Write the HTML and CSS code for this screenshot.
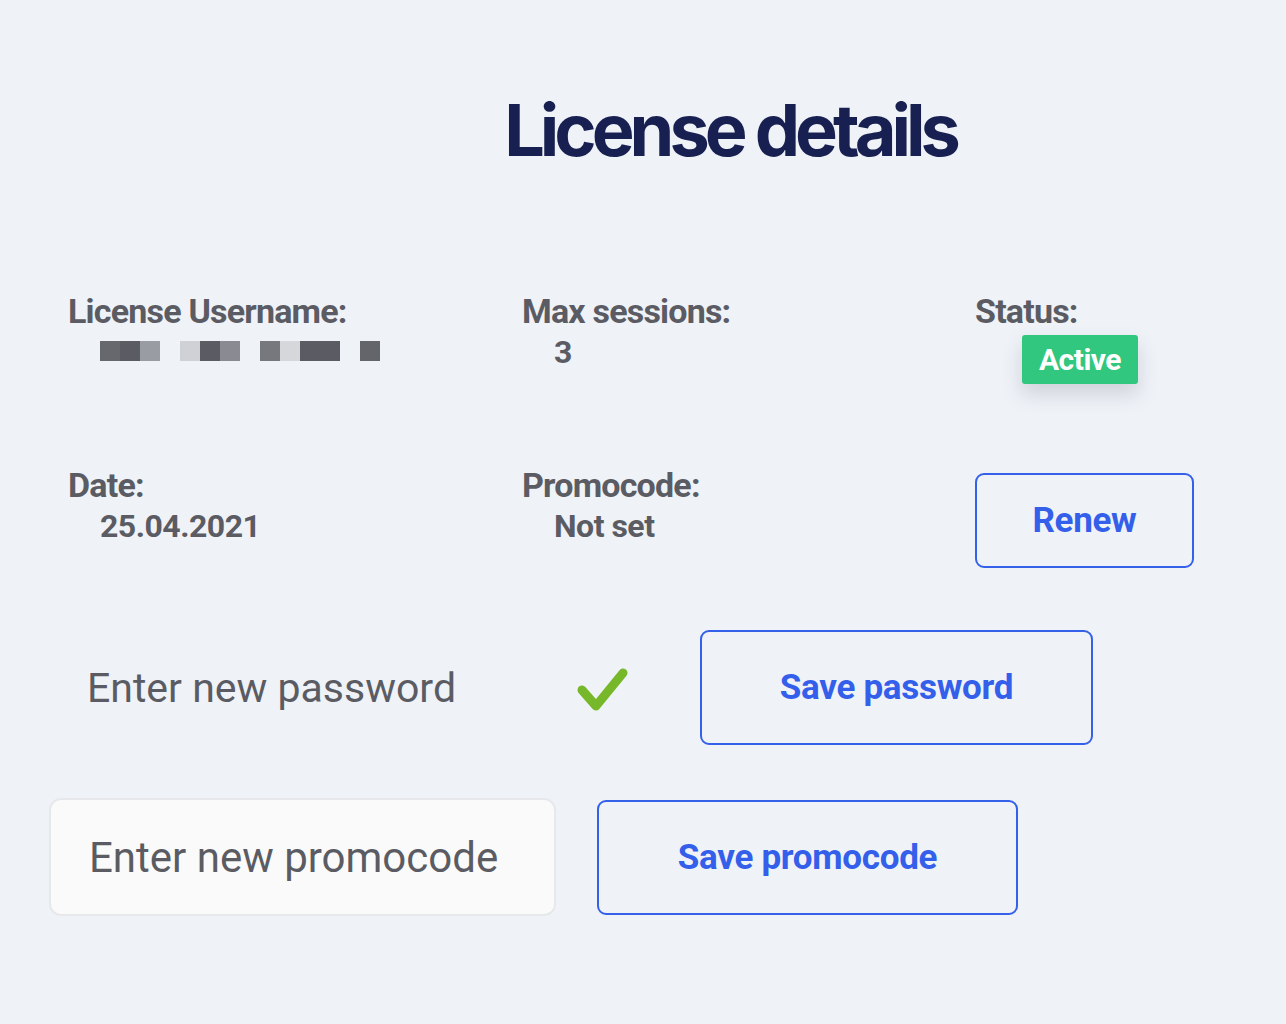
FILE: index.html
```html
<!DOCTYPE html>
<html>
<head>
	<title>License details</title>
	<link rel="stylesheet" href="styles.css">
</head>

<body>
	<main class="page">
		<h1 class="title">License details</h1>

		<section class="info-grid">
			<div class="info-cell">
				<div class="info-label">License Username:</div>
				<div class="pixelated">
					<span class="px c1"></span><span class="px c2"></span><span class="px c3"></span><span class="px gap"></span>
					<span class="px c4"></span><span class="px c2"></span><span class="px c5"></span><span class="px gap"></span>
					<span class="px c6"></span><span class="px c7"></span><span class="px c2"></span><span class="px c2"></span><span class="px gap"></span>
					<span class="px c8"></span>
				</div>
			</div>
			<div class="info-cell">
				<div class="info-label">Max sessions:</div>
				<div class="info-value">3</div>
			</div>
			<div class="info-cell">
				<div class="info-label">Status:</div>
				<span class="badge">Active</span>
			</div>

			<div class="info-cell">
				<div class="info-label">Date:</div>
				<div class="info-value">25.04.2021</div>
			</div>
			<div class="info-cell">
				<div class="info-label">Promocode:</div>
				<div class="info-value">Not set</div>
			</div>
			<div class="info-cell">
				<button class="outline-btn renew-btn">Renew</button>
			</div>
		</section>

		<form class="form-row password-row">
			<input type="password" class="text-input plain" placeholder="Enter new password">
			<svg class="check" width="56" height="50" viewBox="0 0 56 50">
				<path d="M8 27 L22 43 L49 10" fill="none" stroke="#76b82a" stroke-width="9" stroke-linecap="round" stroke-linejoin="round"/>
			</svg>
			<button type="button" class="outline-btn save-password">Save password</button>
		</form>

		<form class="form-row promo-row">
			<input type="text" class="text-input boxed" placeholder="Enter new promocode">
			<button type="button" class="outline-btn save-promo">Save promocode</button>
		</form>
	</main>
</body>

</html>
```

FILE: styles.css
```css
body {
	margin: 0;
	background-color: #eff2f7;
	font-family: Roboto, "Liberation Sans", sans-serif;
	color: #5b5c63;
}

.page {
	padding: 0 0 100px 0;
}

.title {
	margin: 0;
	padding: 82px 0 0 174px;
	text-align: center;
	font-family: Inter, "Liberation Sans", sans-serif;
	font-size: 72px;
	font-weight: 700;
	letter-spacing: -5px;
	line-height: 96px;
	color: #172050;
}

.info-grid {
	display: grid;
	grid-template-columns: 454px 453px 240px;
	grid-auto-rows: 174px;
	padding: 115px 0 0 68px;
}

.info-label {
	font-size: 34px;
	font-weight: 700;
	letter-spacing: -0.8px;
	line-height: 36px;
}

.info-value {
	font-size: 32px;
	font-weight: 700;
	letter-spacing: -0.5px;
	line-height: 40px;
	padding-top: 3px;
	padding-left: 32px;
}

.pixelated {
	display: flex;
	margin: 12px 0 0 32px;
}

.px {
	width: 20px;
	height: 20px;
}

.c1 { background: #67676e; }
.c2 { background: #5b5b63; }
.c3 { background: #9a9ca3; }
.c4 { background: #d0d1d6; }
.c5 { background: #8a8a92; }
.c6 { background: #77777e; }
.c7 { background: #d6d7db; }
.c8 { background: #64646b; }

.badge {
	display: inline-block;
	margin: 6px 0 0 47px;
	width: 116px;
	height: 49px;
	line-height: 49px;
	text-align: center;
	background-color: #31c77f;
	color: white;
	font-size: 30px;
	font-weight: 700;
	letter-spacing: -0.5px;
	border-radius: 3px;
	box-shadow: 0 10px 20px rgba(60, 70, 90, 0.18);
}

.outline-btn {
	background: transparent;
	border: 2px solid #3561ea;
	border-radius: 9px;
	color: #335fea;
	font-family: Roboto, "Liberation Sans", sans-serif;
	font-size: 35px;
	font-weight: 700;
	letter-spacing: -0.3px;
	cursor: pointer;
	box-sizing: border-box;
}

.renew-btn {
	margin-top: 6px;
	width: 219px;
	height: 95px;
}

.form-row {
	display: flex;
	align-items: center;
	margin: 0;
	padding-left: 49px;
}

.password-row {
	margin-top: -11px;
}

.promo-row {
	margin-top: 53px;
}

.text-input {
	box-sizing: border-box;
	width: 507px;
	padding: 0 38px;
	font-family: Roboto, "Liberation Sans", sans-serif;
	font-size: 41px;
	color: #5b5c63;
	outline: none;
}

.text-input::placeholder {
	color: #5b5c63;
}

.plain {
	height: 114px;
	border: none;
	background: transparent;
}

.boxed {
	height: 118px;
	font-size: 42px;
	border: 2px solid #e6e8eb;
	border-radius: 12px;
	background-color: #fafafa;
}

.check {
	margin-left: 18px;
}

.save-password {
	margin-left: 70px;
	width: 393px;
	height: 115px;
}

.save-promo {
	margin-left: 41px;
	width: 421px;
	height: 115px;
}
```
